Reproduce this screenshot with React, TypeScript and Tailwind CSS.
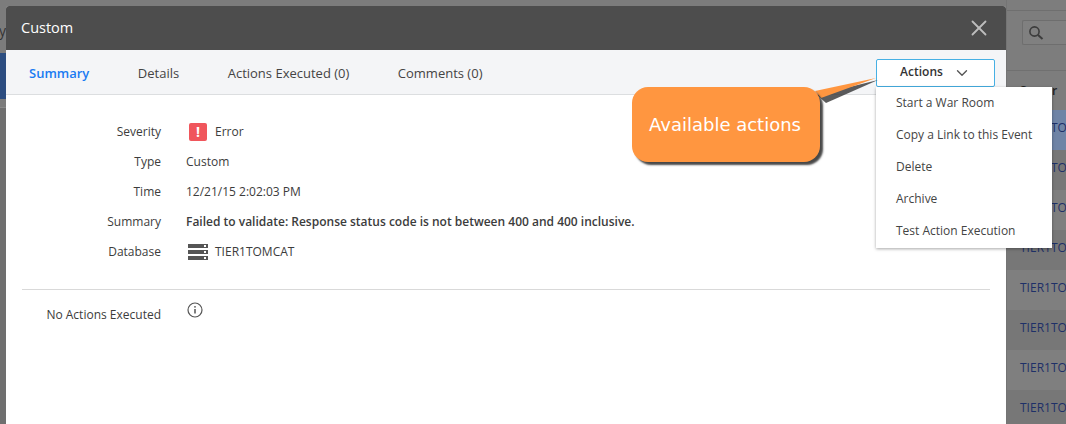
import { ChevronDown, X } from "lucide-react";

const details = [
  { label: "Severity", value: "Error", kind: "severity" },
  { label: "Type", value: "Custom", kind: "text" },
  { label: "Time", value: "12/21/15 2:02:03 PM", kind: "text" },
  {
    label: "Summary",
    value: "Failed to validate: Response status code is not between 400 and 400 inclusive.",
    kind: "bold",
  },
  { label: "Database", value: "TIER1TOMCAT", kind: "database" },
];

const menuItems = [
  "Start a War Room",
  "Copy a Link to this Event",
  "Delete",
  "Archive",
  "Test Action Execution",
];

const tierRows = [0, 1, 2, 3, 4, 5, 6, 7];

function SearchIcon() {
  return (
    <svg width="16" height="16" viewBox="0 0 16 16" fill="none" stroke="#3c3c3c" strokeWidth="1.6">
      <circle cx="6.5" cy="6.5" r="4.6" />
      <path d="M10 10l4.5 4" strokeWidth="2" />
    </svg>
  );
}

function DatabaseIcon() {
  return (
    <svg width="20" height="16" viewBox="0 0 20 16">
      {[0, 6, 12].map((y) => (
        <g key={y}>
          <rect x="0" y={y} width="20" height="4" fill="#555555" />
          <rect x="16" y={y + 1} width="2" height="2" fill="#ffffff" />
        </g>
      ))}
    </svg>
  );
}

function InfoIcon() {
  return (
    <svg width="16" height="16" viewBox="0 0 16 16" fill="none" stroke="#555555" strokeWidth="1.2">
      <circle cx="8" cy="8" r="7" />
      <path d="M8 7v4.5" strokeWidth="1.5" />
      <circle cx="8" cy="4.8" r="0.9" fill="#555555" stroke="none" />
    </svg>
  );
}

function Background() {
  return (
    <div className="flex h-[424px] w-[1066px] overflow-hidden bg-[#7c7c7c]">
      <div className="w-[6px] shrink-0">
        <div className="h-[53px] overflow-hidden pt-[20px] text-[14px] text-[#333]">
          <span className="-ml-[1px] block">y</span>
        </div>
        <div className="h-[46px] bg-[#2c4d80]" />
        <div className="h-[9px] border-b border-[#8a8a8a]" />
        <div className="h-[316px] bg-[#6f6f6f]" />
      </div>
      <div className="flex-1" />
      <div className="w-[60px] shrink-0 overflow-hidden border-l border-[#747474] bg-[#7d7d7d]">
        <div className="h-[11px] border-b border-[#6f6f6f]" />
        <div className="ml-[15px] mt-[9px] flex h-[25px] items-center rounded-l-[2px] border border-r-0 border-[#6e6e6e] bg-[#808080] pl-[5px]">
          <SearchIcon />
        </div>
        <div className="mt-[25px] h-[40px] border-t border-[#707070] pl-[13px] pt-[11px] text-[12px] font-semibold text-[#222]">
          Server
        </div>
        {tierRows.map((row) => (
          <div
            key={row}
            className={
              "flex h-[40px] items-center whitespace-nowrap pb-[4px] pl-[13px] text-[12px] text-[#1e3068] " +
              (row === 0 ? "bg-[#6f84a6]" : row % 2 === 0 ? "bg-[#7f7f7f]" : "bg-[#777777]")
            }
          >
            TIER1TOMCAT
          </div>
        ))}
      </div>
    </div>
  );
}

export default function App() {
  return (
    <div className="relative h-[424px] w-[1066px] overflow-hidden font-['Open_Sans',sans-serif] text-[12px] text-[#3c3c3c]">
      <Background />

      {/* modal */}
      <div className="absolute left-[6px] top-[6px] flex h-[440px] w-[1000px] flex-col overflow-hidden rounded-t-[3px] bg-white">
        <div className="flex h-[44px] shrink-0 items-center justify-between bg-[#4d4d4d] pl-[15px] pr-[14px] text-[14.5px] text-white">
          <span>Custom</span>
          <X size={26} strokeWidth={1.7} color="#bdbdbd" />
        </div>
        <div className="flex h-[45px] shrink-0 items-center gap-[48.5px] border-b border-[#dcdee0] bg-[#f4f5f7] pl-[23px] pt-[3px] text-[13px] text-[#444]">
          <span className="font-semibold text-[#1a7bf2]">Summary</span>
          <span>Details</span>
          <span>Actions Executed (0)</span>
          <span>Comments (0)</span>
        </div>
        <div className="flex flex-col gap-[13px] pt-[28px]">
          {details.map((row) => (
            <div key={row.label} className="flex h-[17px] items-center">
              <div className="w-[155px] text-right">{row.label}</div>
              <div className="ml-[25px] flex items-center">
                {row.kind === "severity" && (
                  <span className="ml-[3px] mr-[8px] flex h-[18px] w-[18px] items-center justify-center rounded-[2px] bg-[#f0565c] text-[14px] font-bold text-white">
                    !
                  </span>
                )}
                {row.kind === "database" && (
                  <span className="ml-[2px] mr-[7px] flex">
                    <DatabaseIcon />
                  </span>
                )}
                <span className={row.kind === "bold" ? "font-semibold" : ""}>{row.value}</span>
              </div>
            </div>
          ))}
        </div>
        <div className="mx-[16px] mt-[29px] border-t border-[#d9d9d9]" />
        <div className="mt-[15px] flex">
          <div className="w-[155px] pt-[1px] text-right">No Actions Executed</div>
          <div className="ml-[26px] -mt-[3px]">
            <InfoIcon />
          </div>
        </div>
      </div>

      {/* actions dropdown */}
      <div className="absolute left-[876px] top-[59px] flex h-[28px] w-[119px] items-center justify-center gap-[10px] rounded-[2px] border border-[#46b0e4] bg-white pb-[2px] font-semibold text-[#333]">
        <span>Actions</span>
        <ChevronDown size={18} strokeWidth={1.8} color="#555555" className="mt-[2px]" />
      </div>
      <div className="absolute left-[876px] top-[87px] w-[176px] bg-white pb-[1px] pl-[20px] text-[#444] shadow-[0_1px_3px_rgba(0,0,0,0.35)]">
        {menuItems.map((item) => (
          <div key={item} className="flex h-[32px] items-center">
            {item}
          </div>
        ))}
      </div>

      {/* annotation */}
      <svg className="absolute left-[800px] top-[70px]" width="80" height="40" viewBox="0 0 80 40">
        <path d="M15 23L76 8L24 31z" fill="#333333" opacity="0.8" transform="translate(2 2)" />
        <path d="M15 21L76 8L21 28z" fill="#ff9640" />
      </svg>
      <div className="absolute left-[632px] top-[87px] flex h-[75px] w-[188px] items-center rounded-[16px] bg-[#ff9640] pl-[17px] font-['DejaVu_Sans',sans-serif] text-[18px] text-white shadow-[3px_3px_2px_rgba(40,40,40,0.85)]">
        Available actions
      </div>
    </div>
  );
}
